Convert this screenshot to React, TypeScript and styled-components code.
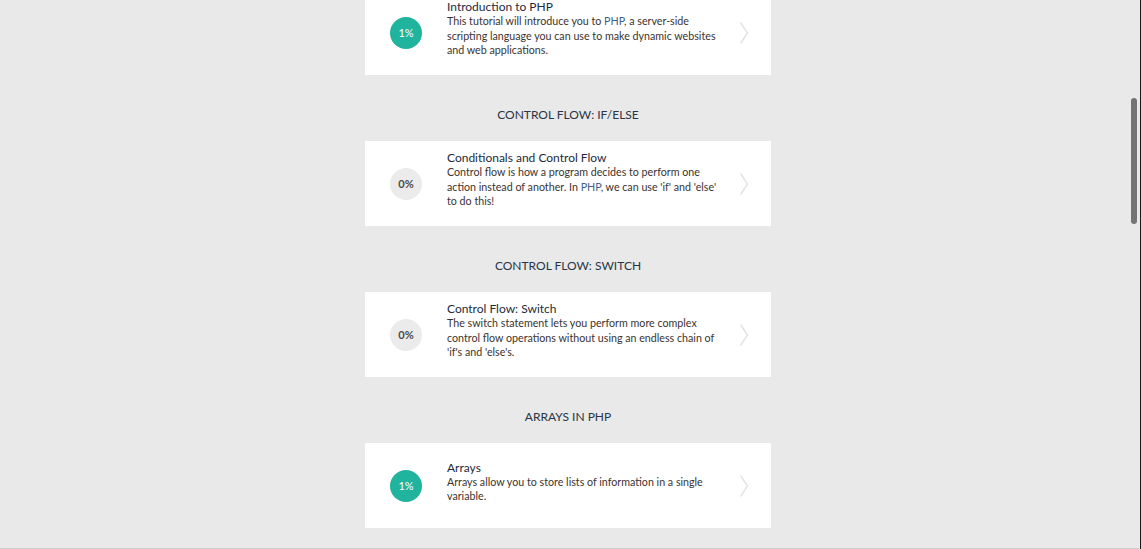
import React from "react";
import styled, { createGlobalStyle } from "styled-components";

const GlobalStyle = createGlobalStyle`
  html, body {
    margin: 0;
    padding: 0;
    height: 549px;
    overflow: hidden;
    background: #e8e9e8;
    font-family: Lato, "Open Sans", sans-serif;
  }
`;

const Php = styled.span`
  color: #3f5f86;
`;

const Page = styled.div`
  width: 1136px;
  display: flex;
  flex-direction: column;
  align-items: center;
`;

const Column = styled.div`
  width: 406px;
  margin-top: -10px;
  display: flex;
  flex-direction: column;
`;

const Section = styled.div`
  margin: 33px 0 19px;
  line-height: 14px;
  font-size: 12px;
  text-align: center;
  color: #2a3547;
`;

const Card = styled.div`
  height: 85px;
  background: #fff;
  display: flex;
  align-items: center;
  padding: 0 22px 0 25px;
  box-sizing: border-box;
`;

const Badge = styled.div<{ $done: boolean }>`
  width: 32px;
  height: 32px;
  border-radius: 50%;
  flex: none;
  display: flex;
  align-items: center;
  justify-content: center;
  font-size: 11px;
  font-weight: ${(p) => (p.$done ? 400 : 700)};
  background: ${(p) => (p.$done ? "#20b39e" : "#ebebeb")};
  color: ${(p) => (p.$done ? "#fff" : "#4a4a4a")};
`;

const Body = styled.div`
  flex: 1;
  margin-left: 25px;
  padding-bottom: 8px;
  padding-right: 14px;
`;

const Title = styled.div`
  font-size: 12px;
  line-height: 15px;
  color: #1e2a3c;
`;

const Desc = styled.div`
  font-size: 10.7px;
  line-height: 14.5px;
  color: #3b3330;
`;

const Arrow = styled.div`
  flex: none;
  display: flex;
  align-items: center;
`;

const Footer = styled.div`
  width: 1141px;
  margin-top: 20px;
  border-top: 2px solid #cbcccb;
  height: 10px;
`;

const ScrollThumb = styled.div`
  position: fixed;
  top: 98px;
  left: 1131px;
  width: 6px;
  height: 126px;
  border-radius: 3px;
  background: #737574;
`;

const EdgeLine = styled.div`
  position: fixed;
  top: 0;
  right: 0;
  width: 1px;
  height: 549px;
  background: #1a1a1a;
`;

type Lesson = {
  section?: string;
  title: string;
  progress: number;
  text: React.ReactNode;
};

const lessons: Lesson[] = [
  {
    title: "Introduction to PHP",
    progress: 1,
    text: (
      <>
        This tutorial will introduce you to <Php>PHP</Php>, a server-side
        scripting language you can use to make dynamic websites and web
        applications.
      </>
    ),
  },
  {
    section: "CONTROL FLOW: IF/ELSE",
    title: "Conditionals and Control Flow",
    progress: 0,
    text: (
      <>
        Control flow is how a program decides to perform one action instead of
        another. In <Php>PHP</Php>, we can use 'if' and 'else' to do this!
      </>
    ),
  },
  {
    section: "CONTROL FLOW: SWITCH",
    title: "Control Flow: Switch",
    progress: 0,
    text: (
      <>
        The switch statement lets you perform more complex control flow
        operations without using an endless chain of 'if's and 'else's.
      </>
    ),
  },
  {
    section: "ARRAYS IN PHP",
    title: "Arrays",
    progress: 1,
    text: <>Arrays allow you to store lists of information in a single variable.</>,
  },
];

function Chevron() {
  return (
    <svg width="10" height="24" viewBox="0 0 10 24">
      <path d="M1.5 1.5 L8.5 12 L1.5 22.5" fill="none" stroke="#e2e3e2" strokeWidth="1.4" />
    </svg>
  );
}

export default function App() {
  return (
    <>
      <GlobalStyle />
      <Page>
        <Column>
          {lessons.map((l) => (
            <React.Fragment key={l.title}>
              {l.section && <Section>{l.section}</Section>}
              <Card>
                <Badge $done={l.progress > 0}>{l.progress}%</Badge>
                <Body>
                  <Title>{l.title}</Title>
                  <Desc>{l.text}</Desc>
                </Body>
                <Arrow>
                  <Chevron />
                </Arrow>
              </Card>
            </React.Fragment>
          ))}
        </Column>
        <Footer />
      </Page>
      <ScrollThumb />
      <EdgeLine />
    </>
  );
}
